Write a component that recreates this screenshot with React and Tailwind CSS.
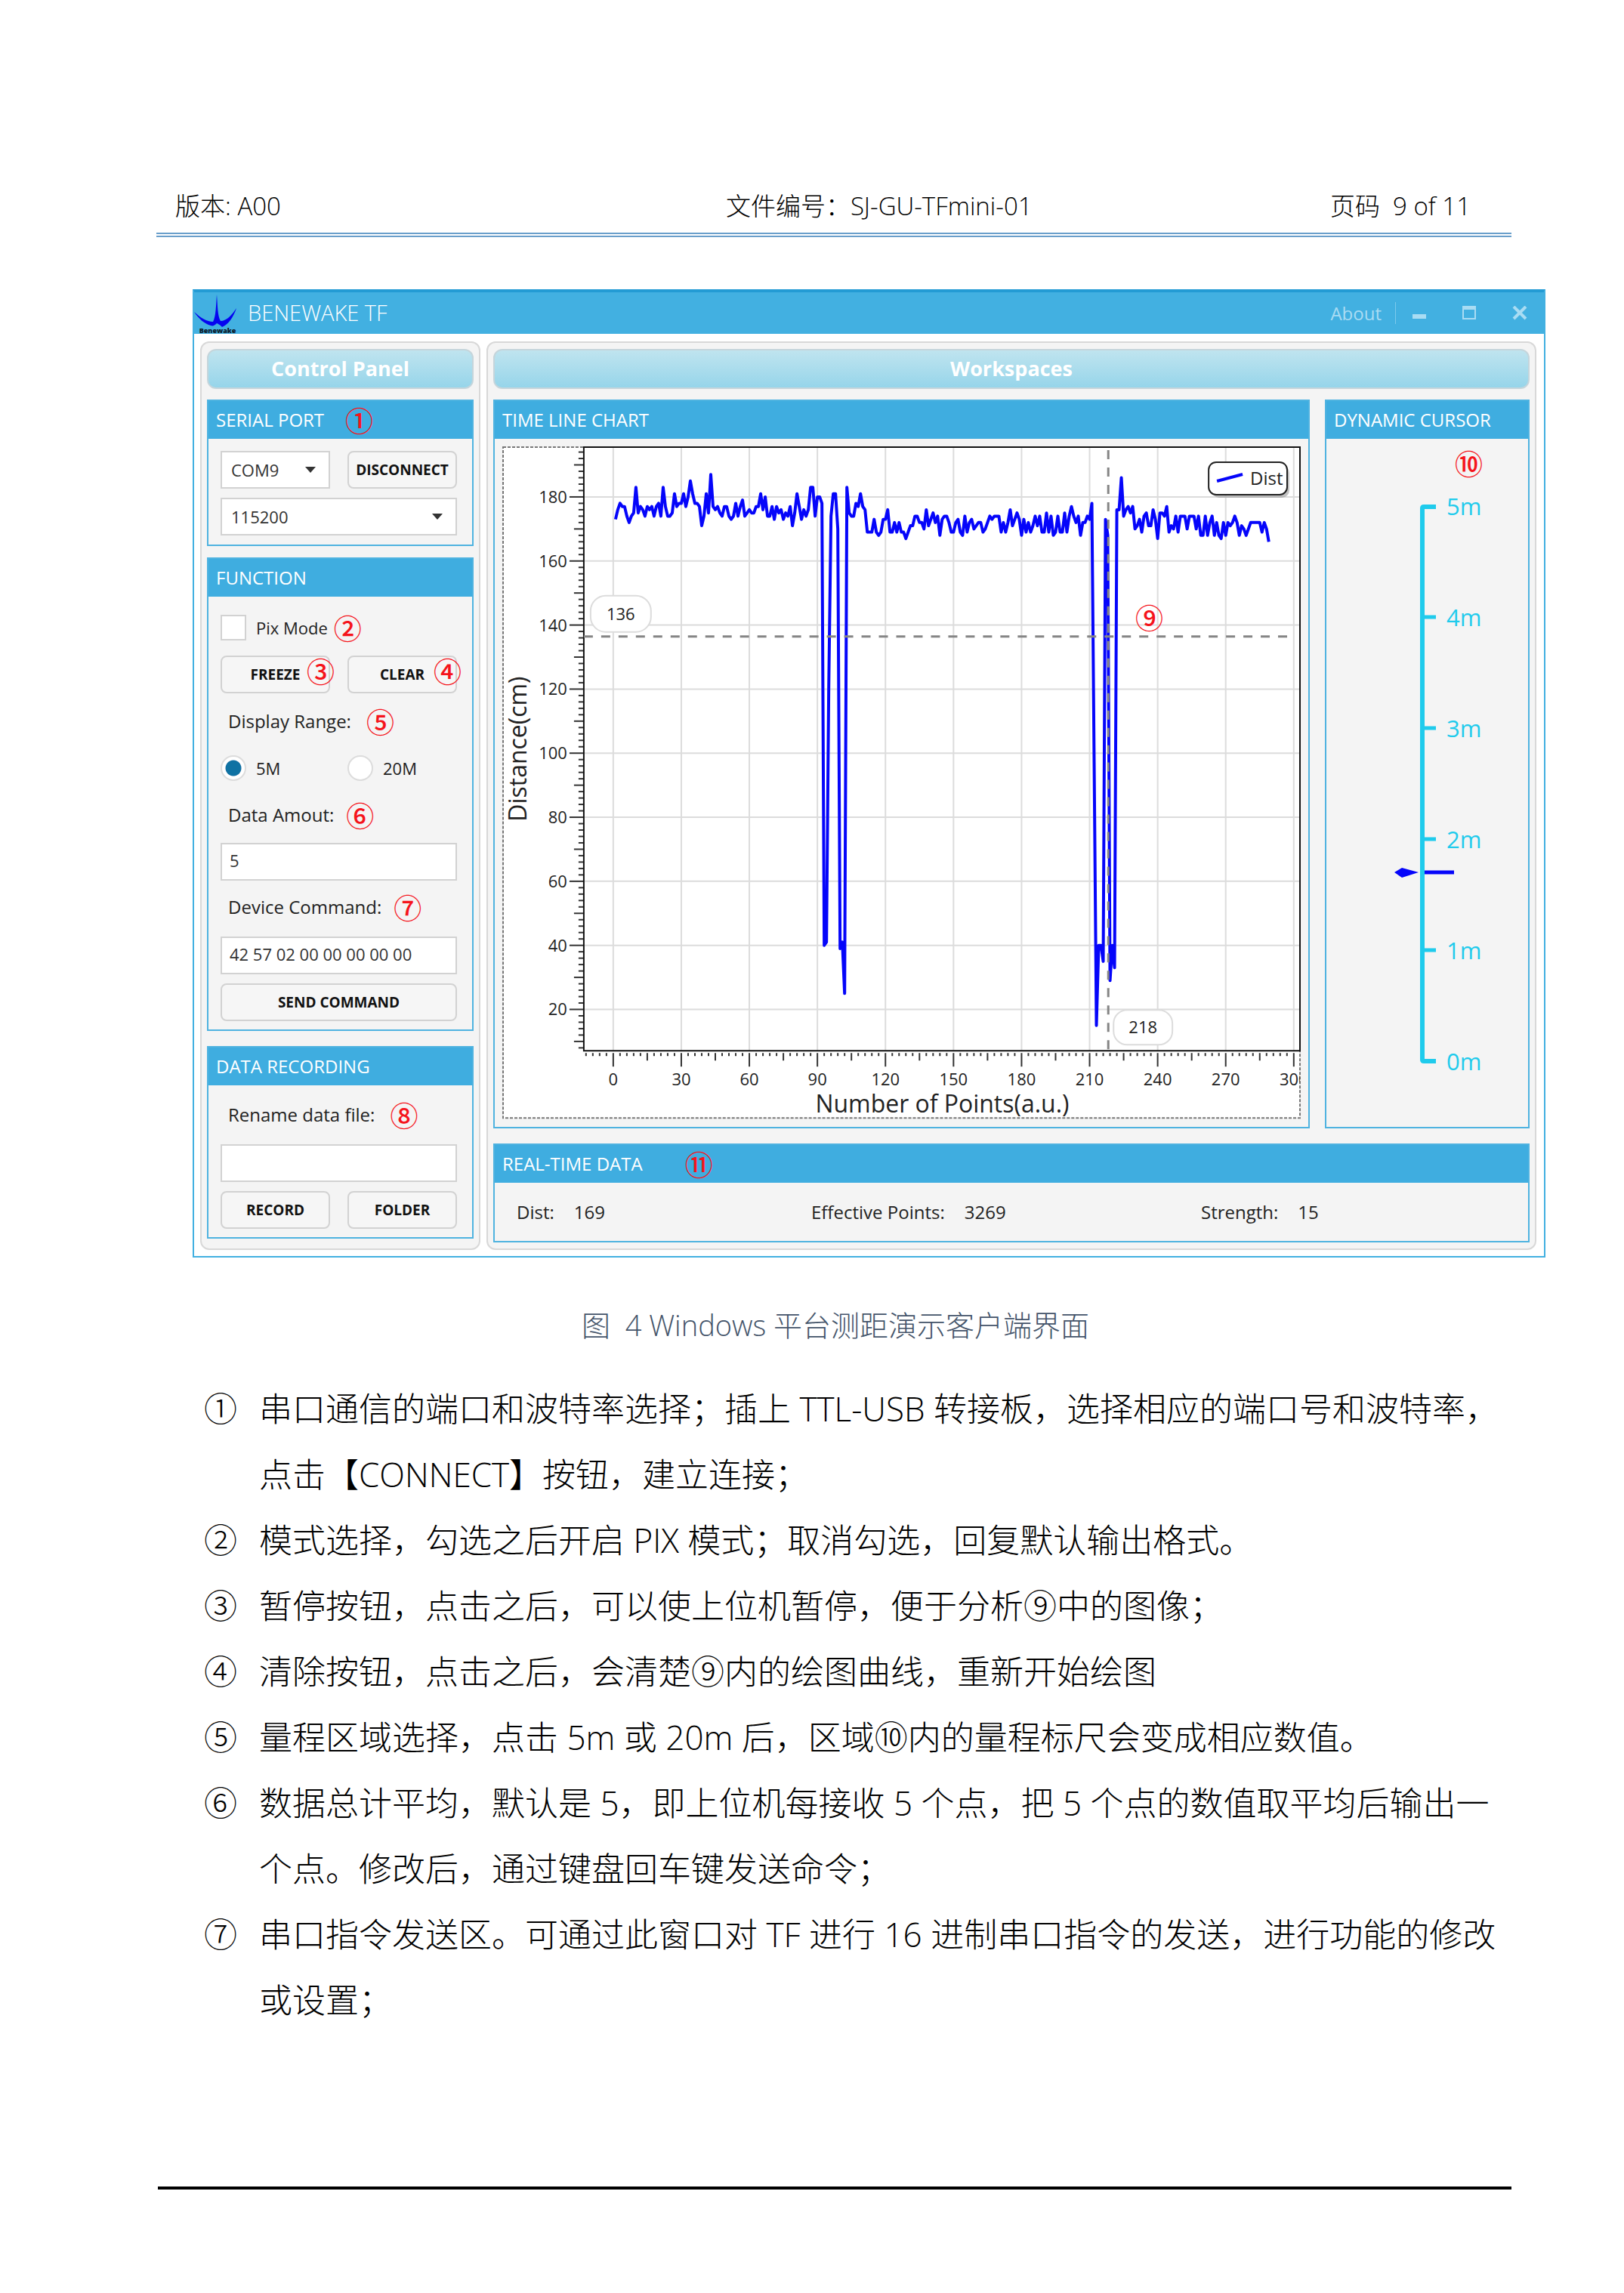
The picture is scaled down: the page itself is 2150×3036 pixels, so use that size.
// TFManualPage.jsx
import { useState } from "react";

// Distance samples (cm), first entry is point 1
const SAMPLES = [
  173, 176, 178, 177, 177, 174, 172, 174, 175, 183, 175, 177, 176, 174, 177, 176, 177, 174, 177, 178,
  174, 183, 177, 174, 174, 175, 181, 177, 178, 178, 181, 177, 180, 185, 181, 178, 178, 177, 171, 174,
  181, 175, 187, 177, 176, 177, 175, 174, 177, 177, 174, 173, 174, 178, 174, 177, 179, 174, 175, 176,
  175, 175, 177, 177, 181, 176, 180, 174, 174, 177, 173, 177, 175, 176, 173, 175, 174, 177, 171, 175,
  181, 177, 173, 176, 174, 176, 183, 183, 174, 180, 180, 178, 40, 41, 120, 174, 181, 181, 170, 39,
  41, 25, 183, 175, 174, 174, 178, 177, 181, 177, 176, 169, 169, 169, 173, 169, 168, 169, 173, 173,
  176, 169, 169, 172, 169, 172, 169, 169, 167, 169, 171, 171, 174, 174, 172, 172, 170, 176, 171, 173,
  175, 172, 174, 168, 173, 174, 174, 172, 169, 169, 172, 173, 169, 168, 174, 169, 172, 173, 170, 171,
  172, 172, 169, 170, 172, 174, 173, 174, 174, 174, 169, 172, 169, 172, 176, 171, 173, 175, 173, 168,
  173, 169, 172, 169, 171, 174, 171, 174, 169, 169, 175, 169, 174, 168, 169, 174, 169, 169, 175, 169,
  174, 177, 174, 172, 174, 168, 172, 172, 174, 173, 178, 97, 15, 40, 40, 35, 173, 168, 29, 40,
  33, 176, 176, 186, 174, 176, 177, 175, 177, 170, 171, 173, 169, 174, 175, 171, 171, 176, 173, 167,
  175, 175, 174, 177, 169, 171, 170, 174, 169, 174, 174, 174, 170, 174, 174, 174, 170, 174, 168, 168,
  174, 168, 172, 174, 168, 172, 168, 167, 172, 168, 172, 171, 172, 174, 172, 168, 171, 170, 168, 170,
  172, 172, 172, 172, 172, 169, 172, 170, 166,
];

const PLOT = { left: 108, right: 1057, top: 1, bottom: 801 };
const toX = (n) => 147 + n * 3.006;
const toY = (v) => 67 + (180 - v) * 4.245;

const range = (from, to, step) => {
  const out = [];
  for (let n = from; n <= to; n += step) out.push(n);
  return out;
};

const LINES = [
  ["①", ["串口通信的端口和波特率选择；插上 TTL-USB 转接板，选择相应的端口号和波特率，", "点击【CONNECT】按钮，建立连接；"]],
  ["②", ["模式选择，勾选之后开启 PIX 模式；取消勾选，回复默认输出格式。"]],
  ["③", ["暂停按钮，点击之后，可以使上位机暂停，便于分析⑨中的图像；"]],
  ["④", ["清除按钮，点击之后，会清楚⑨内的绘图曲线，重新开始绘图"]],
  ["⑤", ["量程区域选择，点击 5m 或 20m 后，区域⑩内的量程标尺会变成相应数值。"]],
  ["⑥", ["数据总计平均，默认是 5，即上位机每接收 5 个点，把 5 个点的数值取平均后输出一", "个点。修改后，通过键盘回车键发送命令；"]],
  ["⑦", ["串口指令发送区。可通过此窗口对 TF 进行 16 进制串口指令的发送，进行功能的修改", "或设置；"]],
];

const Mark = ({ children, className = "" }) => (
  <span className={`font-['Noto_Sans_CJK_SC',sans-serif] text-[37px] leading-9 font-medium text-[#f5141c] ${className}`}>
    {children}
  </span>
);

const Panel = ({ title, mark, className = "", children }) => (
  <section className={`flex flex-col border-2 border-[#4fb3e0] bg-[#f4f4f4] ${className}`}>
    <div className="flex h-[50px] shrink-0 items-center bg-[#3fade0] px-[10px]">
      <h3 className="text-[24px] text-white">{title}</h3>
      {mark}
    </div>
    {children}
  </section>
);

const GroupTitle = ({ children }) => (
  <h2 className="mb-[14px] flex h-[53px] shrink-0 items-center justify-center rounded-xl border-2 border-[#c5d5db] bg-linear-to-b from-[#bfe4ef] to-[#96d5ea] text-[27px] font-bold text-white">
    {children}
  </h2>
);

const Button = ({ children, className = "" }) => (
  <button
    type="button"
    className={`h-[50px] w-full rounded-lg border-2 border-[#d2d2d2] bg-[#f6f6f6] text-[19px] font-bold text-[#111] ${className}`}
  >
    {children}
  </button>
);

const Select = ({ label, options }) => (
  <div className="relative">
    <select
      aria-label={label}
      className="h-[50px] w-full appearance-none border-2 border-[#d2d2d2] bg-white px-3 text-[22px] text-[#333]"
    >
      {options.map((o) => (
        <option key={o}>{o}</option>
      ))}
    </select>
    <svg className="pointer-events-none absolute top-[21px] right-[19px] h-2 w-[14px]" viewBox="0 0 14 8">
      <path d="M0 0h14L7 8z" fill="#333" />
    </svg>
  </div>
);

const TextInput = (props) => (
  <input
    type="text"
    className="h-[50px] w-full border-2 border-[#d2d2d2] bg-white px-[10px] pb-1 text-[22px] text-[#333]"
    {...props}
  />
);

const Radio = ({ label, checked, onChange }) => (
  <label className="flex items-center gap-[13px]">
    <input
      type="radio"
      name="range"
      checked={checked}
      onChange={onChange}
      className="size-[34px] appearance-none rounded-full border-2 border-[#dcdcdc] bg-white checked:bg-radial checked:from-[#0f72a3] checked:from-[10px] checked:to-white checked:to-[11px]"
    />
    {label}
  </label>
);

const Logo = () => (
  <svg className="h-[56px] w-[57px]" viewBox="0 0 57 56">
    <path
      d="M30 3C31 16 31 32 35 38C43 38 50 30 56 21C52 33 45 43 37 46C34 43 32 42 30 41C27 44 25 45 22 44C14 42 6 35 0 26C9 34 17 39 25 39C29 32 29 16 30 3Z"
      fill="#0505f0"
    />
    <text x="31" y="54" textAnchor="middle" fontSize="9" fontWeight="900" fill="#0a1a2a">
      Benewake
    </text>
  </svg>
);

const TimeLineChart = () => (
  <svg className="block w-full overflow-visible text-[22px]" viewBox="0 0 1058 891" fill="#222">
    <rect x="1" y="1" width="1056" height="889" fill="#fff" stroke="#777" strokeWidth="2" strokeDasharray="4 2" />

    {/* Grid */}
    <g stroke="#dcdcdc" strokeWidth="2">
      {range(0, 300, 30).map((n) => (
        <line key={n} x1={toX(n)} x2={toX(n)} y1={PLOT.top} y2={PLOT.bottom} />
      ))}
      {range(20, 180, 20).map((v) => (
        <line key={v} x1={PLOT.left} x2={PLOT.right} y1={toY(v)} y2={toY(v)} />
      ))}
    </g>

    {/* Ticks */}
    <g stroke="#333" strokeWidth="2">
      {range(8, 194, 2).map((v) => (
        <line key={v} x1={v % 20 === 0 ? 89 : v % 10 === 0 ? 95 : 101} x2={PLOT.left} y1={toY(v)} y2={toY(v)} />
      ))}
      {range(-12, 300, 3).map((n) => (
        <line key={n} x1={toX(n)} x2={toX(n)} y1={804} y2={n % 30 === 0 ? 822 : n % 15 === 0 ? 814 : 808} />
      ))}
    </g>
    <rect x="108" y="1" width="949" height="800" fill="none" stroke="#111" strokeWidth="2" />

    {range(20, 180, 20).map((v) => (
      <text key={v} x="86" y={toY(v) + 8} textAnchor="end">
        {v}
      </text>
    ))}
    {/* the last label runs past the plot and is clipped by it */}
    <svg width="1057" height="891">
      {range(0, 300, 30).map((n) => (
        <text key={n} x={toX(n)} y="847" textAnchor="middle">
          {n}
        </text>
      ))}
    </svg>
    <text x="583" y="883" textAnchor="middle" fontSize="32">
      Number of Points(a.u.)
    </text>
    <text transform="translate(32 401) rotate(-90)" textAnchor="middle" fontSize="32">
      Distance(cm)
    </text>

    <polyline
      points={SAMPLES.map((v, i) => `${toX(i + 1)},${toY(v)}`).join(" ")}
      fill="none"
      stroke="#0505fa"
      strokeWidth="4"
      strokeLinejoin="round"
    />

    {/* Cursor lines */}
    <g stroke="#858585" strokeWidth="3" strokeDasharray="12 11">
      <line x1="108" x2="1048" y1="252" y2="252" />
      <line x1="803" x2="803" y1="5" y2="801" />
    </g>
    <rect x="117" y="198" width="80" height="48" rx="20" fill="#fff" stroke="#dcdcdc" strokeWidth="2" />
    <text x="157" y="230" textAnchor="middle">136</text>
    <rect x="810" y="747" width="78" height="46" rx="18" fill="#fff" stroke="#dcdcdc" strokeWidth="2" />
    <text x="849" y="778" textAnchor="middle">218</text>

    {/* Legend */}
    <rect x="940" y="25" width="103" height="43" rx="10" fill="#999" opacity="0.6" />
    <rect x="936" y="21" width="104" height="43" rx="10" fill="#fff" stroke="#222" strokeWidth="2" />
    <line x1="947" y1="46" x2="981" y2="37" stroke="#0505fa" strokeWidth="4" />
    <text x="991" y="51" fontSize="24">Dist</text>
  </svg>
);

const DynamicCursor = () => (
  <svg className="block w-full overflow-visible text-[31px]" viewBox="0 0 267 780" fill="#1fcbec">
    <g stroke="#1fcbec" strokeWidth="5">
      <path d="M145 12H129Q127 12 127 14V744Q127 746 129 746H145" fill="none" strokeWidth="6" />
      {range(1, 4, 1).map((m) => (
        <line key={m} x1="127" x2="145" y1={746 - m * 147} y2={746 - m * 147} />
      ))}
    </g>
    {range(0, 5, 1).map((m) => (
      <text key={m} x="159" y={758 - m * 147}>
        {m}m
      </text>
    ))}
    <path d="M90 496L100 490L122 496L100 503Z" fill="#0505fa" />
    <line x1="130" x2="169" y1="496" y2="496" stroke="#0505fa" strokeWidth="5" />
  </svg>
);

const Reading = ({ label, value }) => (
  <p className="flex gap-[26px]">
    <span>{label}</span>
    <span>{value}</span>
  </p>
);

const ControlPanel = () => {
  const [pix, setPix] = useState(false);
  const [distRange, setDistRange] = useState("5M");

  return (
    <div className="flex w-[371px] shrink-0 flex-col rounded-xl border-2 border-[#d8d8d8] bg-[#f4f4f4] px-[7px] pt-2 pb-[13px]">
      <GroupTitle>Control Panel</GroupTitle>

      <Panel title="SERIAL PORT" mark={<Mark className="ml-7">①</Mark>} className="mb-[15px]">
        <div className="grid grid-cols-2 gap-x-[23px] gap-y-3 pt-4 pr-5 pb-3 pl-4">
          <Select label="Port" options={["COM9"]} />
          <Button>DISCONNECT</Button>
          <div className="col-span-2">
            <Select label="Baud rate" options={["115200"]} />
          </div>
        </div>
      </Panel>

      <Panel title="FUNCTION" className="mb-5">
        <div className="flex flex-col pt-6 pr-5 pb-[11px] pl-4 text-[22px] text-[#222]">
          <div className="mb-5 flex h-[34px] items-center">
            <label className="flex items-center gap-[13px]">
              <input
                type="checkbox"
                checked={pix}
                onChange={(e) => setPix(e.target.checked)}
                className="size-[34px] appearance-none border-2 border-[#d2d2d2] bg-white checked:bg-[#0f72a3]"
              />
              Pix Mode
            </label>
            <Mark className="ml-2">②</Mark>
          </div>
          <div className="grid grid-cols-2 gap-x-[23px]">
            <div className="relative">
              <Button>FREEZE</Button>
              <Mark className="absolute top-[2px] -right-[6px]">③</Mark>
            </div>
            <div className="relative">
              <Button>CLEAR</Button>
              <Mark className="absolute top-[2px] -right-[6px]">④</Mark>
            </div>
          </div>
          <div className="flex h-[82px] items-center gap-5 pb-2 pl-[10px] text-[24px]">
            Display Range: <Mark>⑤</Mark>
          </div>
          <div className="grid grid-cols-2 gap-x-[23px]">
            <Radio label="5M" checked={distRange === "5M"} onChange={() => setDistRange("5M")} />
            <Radio label="20M" checked={distRange === "20M"} onChange={() => setDistRange("20M")} />
          </div>
          <div className="flex h-[82px] items-center gap-4 pt-2 pl-[10px] text-[24px]">
            <label htmlFor="amount">Data Amout:</label> <Mark>⑥</Mark>
          </div>
          <TextInput id="amount" defaultValue="5" />
          <div className="flex h-[74px] items-center gap-4 pb-1 pl-[10px] text-[24px]">
            <label htmlFor="command">Device Command:</label> <Mark>⑦</Mark>
          </div>
          <TextInput id="command" defaultValue="42 57 02 00 00 00 00 00" />
          <Button className="mt-3">SEND COMMAND</Button>
        </div>
      </Panel>

      <Panel title="DATA RECORDING">
        <div className="pr-5 pb-[11px] pl-4 text-[22px] text-[#222]">
          <div className="flex h-[78px] items-center gap-5 pl-[10px] text-[24px]">
            <label htmlFor="rename">Rename data file:</label> <Mark>⑧</Mark>
          </div>
          <TextInput id="rename" />
          <div className="mt-3 grid grid-cols-2 gap-x-[23px]">
            <Button>RECORD</Button>
            <Button>FOLDER</Button>
          </div>
        </div>
      </Panel>
    </div>
  );
};

const Workspaces = () => (
  <div className="flex min-w-0 flex-1 flex-col rounded-xl border-2 border-[#d8d8d8] bg-[#f4f4f4] px-[7px] py-2">
    <GroupTitle>Workspaces</GroupTitle>
    <div className="flex flex-1 gap-5">
      <Panel title="TIME LINE CHART" className="min-w-0 flex-1">
        <div className="relative p-[10px]">
          <TimeLineChart />
          <Mark className="absolute top-[24%] left-[78%] ml-2">⑨</Mark>
        </div>
      </Panel>
      <Panel title="DYNAMIC CURSOR" className="w-[271px] shrink-0">
        <div className="flex flex-col pt-[14px]">
          <Mark className="mr-[60px] mb-7 self-end">⑩</Mark>
          <DynamicCursor />
        </div>
      </Panel>
    </div>
    <Panel title="REAL-TIME DATA" mark={<Mark className="ml-14 font-light">⑪</Mark>} className="mt-5">
      <div className="grid grid-cols-[390px_516px_1fr] items-center pl-[29px] text-[24px] leading-[77px] text-[#222]">
        <Reading label="Dist:" value="169" />
        <Reading label="Effective Points:" value="3269" />
        <Reading label="Strength:" value="15" />
      </div>
    </Panel>
  </div>
);

const AppWindow = () => (
  <section className="mt-[69px] -mr-[45px] ml-12 border-2 border-[#42b0e1] border-t-[#239bd4] bg-white">
    <div className="flex h-[57px] items-center border-t-2 border-[#239bd4] bg-[#42b0e1] pr-[22px] text-[#a9dcf3]">
      <Logo />
      <h1 className="ml-[14px] flex-1 pb-[2px] text-[29px] font-light text-white">BENEWAKE TF</h1>
      <button type="button" className="text-[24px] font-medium">
        About
      </button>
      <span className="mx-[18px] h-[29px] w-px bg-[#7cc9eb]" />
      <div className="flex items-center gap-12 pl-1">
        <button type="button" aria-label="Minimize">
          <svg className="h-5 w-[18px]" viewBox="0 0 18 20">
            <rect x="0" y="11" width="18" height="6" fill="currentColor" />
          </svg>
        </button>
        <button type="button" aria-label="Maximize">
          <svg className="h-5 w-[18px]" viewBox="0 0 18 20">
            <path d="M1 1H17V17H1Z" fill="none" stroke="currentColor" strokeWidth="2" />
            <rect x="0" y="0" width="18" height="5" fill="currentColor" />
          </svg>
        </button>
        <button type="button" aria-label="Close">
          <svg className="h-5 w-5" viewBox="0 0 20 20">
            <path d="M2 1L18 17M18 1L2 17" stroke="currentColor" strokeWidth="4" />
          </svg>
        </button>
      </div>
    </div>
    <div className="flex gap-2 pt-[10px] pr-[10px] pb-2 pl-2">
      <ControlPanel />
      <Workspaces />
    </div>
  </section>
);

export default function App() {
  return (
    <div className="min-h-screen bg-white pt-[249px] pr-[149px] pb-[137px] pl-[207px] font-['Open_Sans','Noto_Sans_CJK_SC',sans-serif] text-black">
      <header className="grid grid-cols-[42.5%_1fr_auto] border-b-6 border-double border-[#6a9fcb] pr-[54px] pb-[11px] pl-[25px] text-[33px] leading-[48px] font-light">
        <span>版本: A00</span>
        <span>文件编号：SJ-GU-TFmini-01</span>
        <span className="whitespace-pre">页码  9 of 11</span>
      </header>

      <AppWindow />

      <p className="mt-[53px] pl-1 text-center text-[38px] leading-[72px] font-light whitespace-pre text-[#44546a]">
        图  4 Windows 平台测距演示客户端界面
      </p>

      <ul className="mt-8 pl-[63px] text-[44px] leading-[87px] font-light">
        {LINES.map(([num, rows]) => (
          <li key={num} className="flex">
            <span className="w-[73px] shrink-0">{num}</span>
            <div>
              {rows.map((row) => (
                <p key={row} className="whitespace-nowrap">
                  {row}
                </p>
              ))}
            </div>
          </li>
        ))}
      </ul>

      <footer className="mt-[203px] ml-[2px] border-t-4 border-black" />
    </div>
  );
}
